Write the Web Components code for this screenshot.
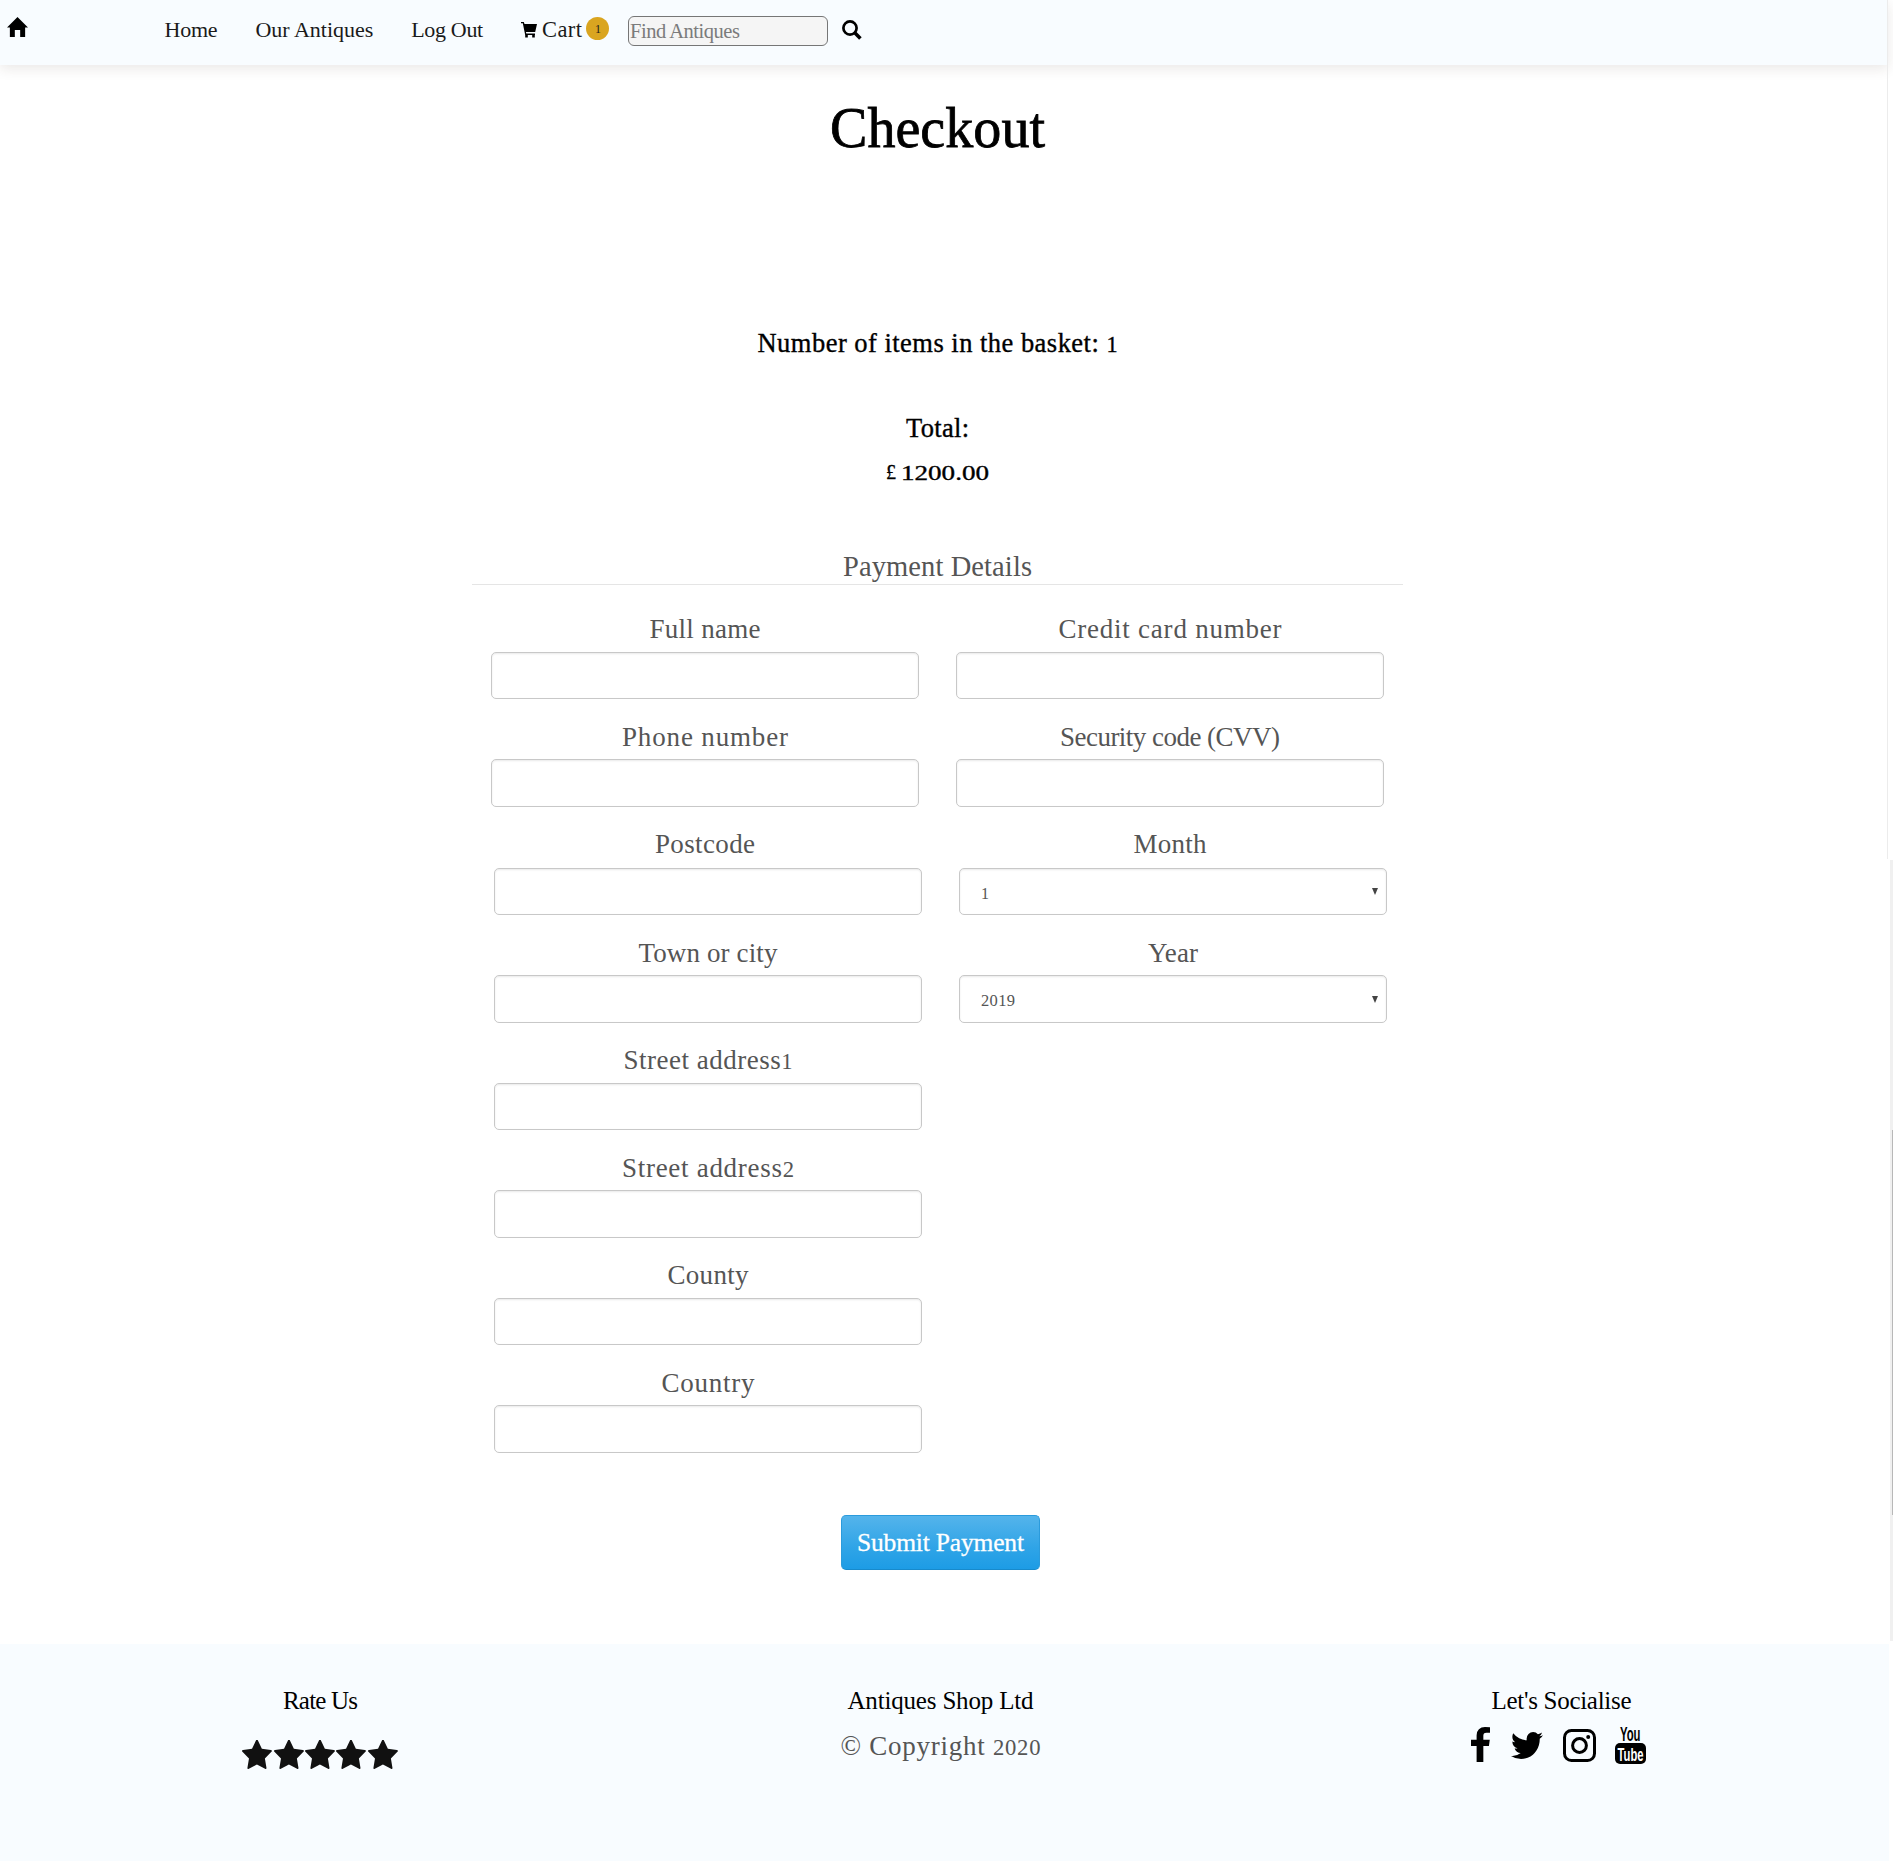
<!DOCTYPE html>
<html lang="en">
<head>
<meta charset="utf-8">
<title>Checkout</title>
<style>
html,body{margin:0;padding:0;background:#fff}
body{width:1893px;height:1869px;overflow:hidden;font-family:"Liberation Serif",serif;color:#000}
</style>
</head>
<body>
<shop-page></shop-page>
<script>
const define = (name, html, setup) => customElements.define(name, class extends HTMLElement {
  connectedCallback() {
    if (this.shadowRoot) return;
    const t = document.createElement('template');
    t.innerHTML = typeof html === 'function' ? html(this) : html;
    this.attachShadow({mode: 'open'}).append(t.content.cloneNode(true));
    if (setup) setup(this);
  }
});

/* One line of text spread evenly over a set width. */
define('fit-text', el => `<style>
:host{display:block;flex:none;white-space:nowrap;width:${el.getAttribute('w')}px;font-size:${el.getAttribute('size')}px;line-height:${el.getAttribute('line') || 30}px}
span{display:inline-block;transform-origin:0 50%}
::slotted(small){font-size:.84em;line-height:1}
</style><span><slot></slot></span>`, el => {
  const span = el.shadowRoot.querySelector('span');
  const target = +el.getAttribute('w'), natural = span.getBoundingClientRect().width;
  if (el.hasAttribute('stretch')) span.style.transform = `scaleX(${target / natural})`;
  else span.style.letterSpacing = (target - natural) / Math.max(1, el.textContent.length - 1) + 'px';
});

define('shop-nav', `<style>
:host{display:block;width:1888px;height:65px;background:#f8fcff;box-shadow:0 4px 12px rgba(60,40,30,.1);color:#1a1a1a}
nav{display:flex;align-items:flex-start;height:65px;box-sizing:border-box;padding-left:7px}
svg{display:block;flex:none}
.home{margin:17px 136.6px 0 0}
.home,.cart,.go{fill:#000}
fit-text{margin-top:15px}
.a{margin-right:37.8px}
.cart{margin:22px 5px 0 0}
.badge{width:23px;height:23px;border-radius:50%;background:#daa520;margin:17px 19px 0 4px;display:flex;justify-content:center}
.badge fit-text{margin:2px 0 0 1px}
.search{width:200px;height:30px;box-sizing:border-box;border:1px solid #767676;border-radius:6px;background:#f5f5f5;color:#7b7b7b;margin:16px 14px 0 0;padding-left:1px}
.search fit-text{margin-top:1px}
.go{margin-top:20px}
</style>
<nav>
<svg class="home" width="21" height="20" viewBox="0 0 22 20" preserveAspectRatio="none"><path d="M11 0L22 10.4H19V20H13.8V13H8.2V20H3V10.4H0Z"/></svg>
<fit-text class="a" w="53" size="22">Home</fit-text>
<fit-text class="a" w="118" size="22">Our Antiques</fit-text>
<fit-text class="a" w="72" size="22">Log Out</fit-text>
<svg class="cart" width="16" height="16" viewBox="0 0 16 16"><path d="M0 0H2.8L3.5 1.9H16L14.2 10H4.9L5.3 11.5H14V13H13.8V15.6H11.2V13H6.8V15.6H4.2V13L1.8 1.3H0Z"/></svg>
<fit-text w="40" size="22.5">Cart</fit-text>
<div class="badge"><fit-text w="6" size="12" line="20">1</fit-text></div>
<div class="search"><fit-text w="110" size="20.5" line="26">Find Antiques</fit-text></div>
<svg class="go" width="20" height="20" viewBox="0 0 20 20"><circle cx="8" cy="8" r="6.6" fill="none" stroke="#000" stroke-width="2.7"/><path d="M12.8 12.8L18.4 18.4" stroke="#000" stroke-width="3.6"/></svg>
</nav>`);

define('order-summary', `<style>
:host{display:flex;flex-direction:column;align-items:center;height:485px}
fit-text{-webkit-text-stroke:.35px #000}
.h{margin-top:32px;-webkit-text-stroke:.8px #000}
.n{margin-top:169px}.t{margin-top:55px}
.p{display:flex;gap:5px;margin-top:15px}
</style>
<fit-text class="h" w="215" size="56" line="62">Checkout</fit-text>
<fit-text class="n" w="360" size="26.5">Number of items in the basket: <small>1</small></fit-text>
<fit-text class="t" w="63" size="26.5">Total:</fit-text>
<div class="p"><fit-text w="10" size="22" line="28" stretch>£</fit-text><fit-text w="88" size="20" stretch>1200.00</fit-text></div>`);

define('form-field', el => `<style>
:host{display:flex;flex-direction:column;justify-content:space-between;align-items:center;height:85px;width:428px}
:host([tall]){height:86px}
:host([shift]){margin-left:3px}
:host([tall]) .label{margin-left:-6px}
.box{width:428px;height:${el.getAttribute('h')}px;box-sizing:border-box;border:1px solid #c8c8c8;border-radius:5px;background:#fff;box-shadow:inset 0 1px 2px rgba(0,0,0,.09);display:flex;align-items:center;justify-content:space-between;padding:0 8px 0 21px}
.arrow{width:0;height:0;border:3.5px solid transparent;border-top:7px solid #444;border-bottom:0}
</style>
<fit-text class="label" w="${el.getAttribute('w')}" size="27">${el.getAttribute('label').replace(/(\d)/, '<small>$1</small>')}</fit-text>
<div class="box"><slot></slot>${el.hasAttribute('select') ? '<span class="arrow"></span>' : ''}</div>`);

define('payment-form', `<style>
:host{display:block;width:931px;margin-left:472px;color:#555}
.legend{display:flex;justify-content:center;height:34px;border-bottom:1px solid #e5e5e5}
.cols{display:flex;gap:34px;padding:29px 16px 0 19px}
.col{display:flex;flex-direction:column;width:431px}
.col form-field:nth-child(odd){margin-bottom:23px}
.col form-field:nth-child(even){margin-bottom:22px}
</style>
<div class="legend"><fit-text w="189" size="28.5" line="34">Payment Details</fit-text></div>
<div class="cols">
<div class="col">
<form-field label="Full name" w="111" h="47"></form-field>
<form-field label="Phone number" w="166" h="48"></form-field>
<form-field label="Postcode" w="100" h="47" tall shift></form-field>
<form-field label="Town or city" w="139" h="48" shift></form-field>
<form-field label="Street address1" w="169" h="47" shift></form-field>
<form-field label="Street address2" w="172" h="48" shift></form-field>
<form-field label="County" w="81" h="47" shift></form-field>
<form-field label="Country" w="93" h="48" shift></form-field>
</div>
<div class="col">
<form-field label="Credit card number" w="223" h="47"></form-field>
<form-field label="Security code (CVV)" w="220" h="48"></form-field>
<form-field label="Month" w="73" h="47" tall shift select><fit-text w="8" size="16" line="20" style="margin-top:5px">1</fit-text></form-field>
<form-field label="Year" w="50" h="48" shift select><fit-text w="34" size="16.5" line="20" style="margin-top:3px">2019</fit-text></form-field>
</div>
</div>`);

define('submit-button', el => `<style>
:host{display:flex;justify-content:center;width:199px;height:55px;box-sizing:border-box;margin:40px 0 0 841px;border:1px solid #2b9bdc;border-bottom-color:#178acc;border-radius:5px;background:linear-gradient(#54b4eb,#2fa4e7 60%,#1d9ce5);color:#fff;padding-top:12px}
fit-text{-webkit-text-stroke:.3px #fff}
</style><fit-text w="167" size="25.5">${el.getAttribute('label')}</fit-text>`);

define('star-rating', `<style>:host{display:flex;gap:1.4px;margin-left:-1px}svg{display:block;width:29.9px;height:29px;fill:#111}</style>` +
`<svg viewBox="64 59 1664 1560" preserveAspectRatio="none"><path d="M1728 647q0 22-26 48l-363 354 86 500q1 7 1 20 0 21-10.5 35.5t-30.5 14.5q-19 0-40-12l-449-236-449 236q-22 12-40 12-21 0-31.5-14.5t-10.5-35.5q0-6 2-20l86-500-364-354q-25-27-25-48 0-37 56-46l502-73 225-455q19-41 49-41t49 41l225 455 502 73q56 9 56 46z"/></svg>`.repeat(5));

define('social-links', `<style>:host{display:flex;align-items:flex-start;height:40px}svg{display:block;flex:none;overflow:visible}
text{font-family:"Liberation Sans Narrow","Liberation Sans",sans-serif;font-weight:bold}</style>
<svg width="19" height="35" viewBox="479 0 864 1664" preserveAspectRatio="none" style="margin:1px 21px 0 0"><path d="M1343 12v264h-157q-86 0-116 36t-30 108v189h293l-39 296h-254v759h-306v-759h-255v-296h255v-218q0-186 104-288.5t277-102.5q147 0 228 12z"/></svg>
<svg width="32" height="27" viewBox="108 256 1576 1280" preserveAspectRatio="none" style="margin:6px 20px 0 0"><path d="M1684 408q-67 98-162 167 1 14 1 42 0 130-38 259.5t-115.5 248.5-184.5 210.5-258 146-323 54.5q-271 0-496-145 35 4 78 4 225 0 401-138-105-2-188-64.5t-114-159.5q33 5 61 5 43 0 85-11-112-23-185.5-111.5t-73.5-205.5v-4q68 38 146 41-66-44-105-115t-39-154q0-88 44-163 121 149 294.5 238.5t371.5 99.5q-8-38-8-74 0-134 94.5-228.5t228.5-94.5q140 0 236 102 109-21 205-78-37 115-142 178 93-10 186-50z"/></svg>
<svg width="33" height="33" viewBox="0 0 33 33" style="margin:3px 19px 0 0"><rect x="1.5" y="1.5" width="30" height="30" rx="7" fill="none" stroke="#000" stroke-width="3"/><circle cx="16.5" cy="16.5" r="6.9" fill="none" stroke="#000" stroke-width="3"/><circle cx="25.2" cy="7.9" r="2"/></svg>
<svg width="31" height="38" viewBox="0 0 31 38"><text x="5" y="14.5" font-size="20" textLength="20.5" lengthAdjust="spacingAndGlyphs">You</text><rect y="17" width="31" height="21" rx="5"/><text x="2.5" y="34.5" font-size="19" textLength="26" lengthAdjust="spacingAndGlyphs" fill="#fff">Tube</text></svg>`);

define('shop-footer', `<style>
:host{display:flex;width:1889px;height:217px;margin-top:74px;background:#f8fcff;box-sizing:border-box;padding-top:42px}
.c{display:flex;flex-direction:column;align-items:center}
.l{width:641px}.m{width:599px}.r{flex:1;padding-right:13px}
star-rating{margin-top:24px}
.copy{margin-top:15px;color:#555}
social-links{margin-top:10px}
</style>
<div class="c l"><fit-text w="75" size="25">Rate Us</fit-text><star-rating></star-rating></div>
<div class="c m"><fit-text w="186" size="25">Antiques Shop Ltd</fit-text><fit-text class="copy" w="200" size="27">© Copyright <small>2020</small></fit-text></div>
<div class="c r"><fit-text w="140" size="25" style="margin-left:7px">Let's Socialise</fit-text><social-links></social-links></div>`);

define('page-rail', `<style>
:host{position:absolute;top:0;left:1887px;width:6px;height:1641px}
.edge{width:1px;height:859px;background:#ececec}
.track{display:flex;flex-direction:column;align-items:flex-end;width:3px;height:781px;margin:1px 0 0 3px;background:#f0f0f0}
.thumb{width:1px;height:385px;margin-top:270px;background:#b8b8b8}
</style><div class="edge"></div><div class="track"><div class="thumb"></div></div>`);

define('shop-page', `<style>
:host{display:block;position:relative;width:1893px;height:1869px;overflow:hidden}
order-summary{width:1875px}
</style>
<shop-nav></shop-nav>
<order-summary></order-summary>
<payment-form></payment-form>
<submit-button label="Submit Payment"></submit-button>
<shop-footer></shop-footer>
<page-rail></page-rail>`);
</script>
</body>
</html>
